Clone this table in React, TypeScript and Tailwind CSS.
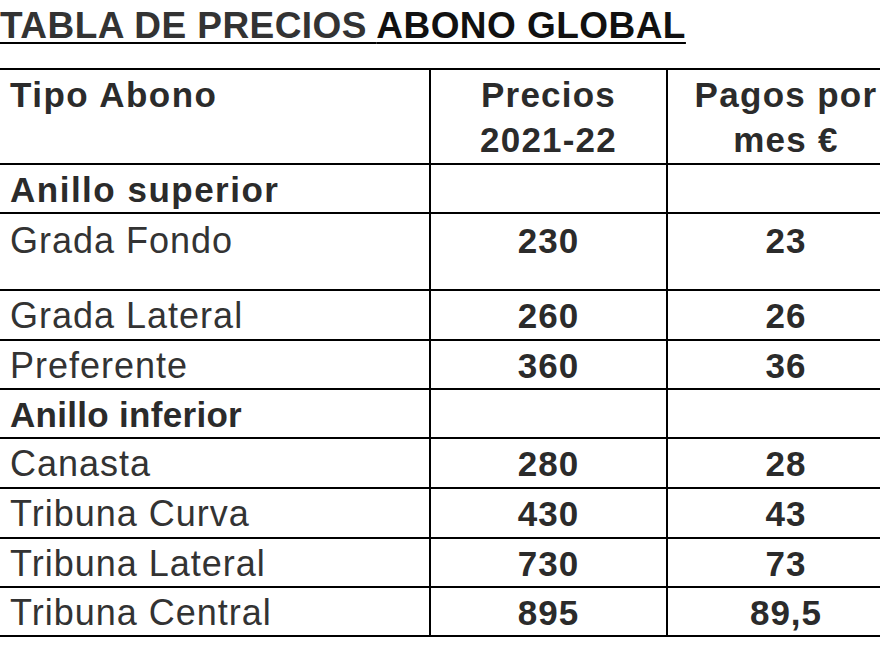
import React from "react";

type Row = {
  name: string;
  price?: string;
  month?: string;
  section?: boolean;
  h: string;
  pt?: string;
  track?: string;
};

const rows: Row[] = [
  { name: "Anillo superior", section: true, h: "h-[49px]", track: "tracking-[1.5px]" },
  { name: "Grada Fondo", price: "230", month: "23", h: "h-[77px]", pt: "pt-[4px]" },
  { name: "Grada Lateral", price: "260", month: "26", h: "h-[50px]" },
  { name: "Preferente", price: "360", month: "36", h: "h-[49px]" },
  { name: "Anillo inferior", section: true, h: "h-[49px]", track: "tracking-[0.3px]" },
  { name: "Canasta", price: "280", month: "28", h: "h-[50px]" },
  { name: "Tribuna Curva", price: "430", month: "43", h: "h-[50px]" },
  { name: "Tribuna Lateral", price: "730", month: "73", h: "h-[49px]" },
  { name: "Tribuna Central", price: "895", month: "89,5", h: "h-[49px]" },
];

const font = { fontFamily: '"Liberation Sans", Arial, sans-serif' };

export default function App() {
  return (
    <div className="w-[880px] h-[660px] overflow-hidden bg-white" style={font}>
      <div className="pt-[6px] h-[46px] text-[37px] leading-[40px] font-bold tracking-[0.45px] whitespace-nowrap underline decoration-2 underline-offset-[4px]">
        <span className="text-[#333]">TABLA DE PRECIOS </span>
        <span className="text-[#111]">ABONO GLOBAL</span>
      </div>
      <div className="mt-[22px] w-[920px] border-t-2 border-black">
        <div className="flex h-[95px] border-b-2 border-black text-[35px] leading-[45px] font-bold text-[#2b2b2b]">
          <div className="w-[431px] border-r-2 border-black pl-[10px] pt-[2px] tracking-[1.5px]">Tipo Abono</div>
          <div className="w-[237px] border-r-2 border-black pt-[2px] text-center tracking-[1.2px]">
            Precios
            <br />
            2021-22
          </div>
          <div className="w-[236px] pt-[2px] text-center whitespace-nowrap tracking-[1.3px]">
            Pagos por
            <br />
            mes €
          </div>
        </div>
        {rows.map((r) => (
          <div key={r.name} className={`flex ${r.h} border-b-2 border-black leading-[45px]`}>
            <div
              className={`w-[431px] border-r-2 border-black pl-[10px] ${r.pt ?? "pt-[2px]"} ${
                r.section
                  ? `text-[35px] font-bold ${r.track} text-[#2b2b2b]`
                  : "text-[36px] tracking-[1px] text-[#333]"
              }`}
            >
              {r.name}
            </div>
            <div
              className={`w-[237px] border-r-2 border-black ${r.pt ?? "pt-[2px]"} text-center text-[35px] font-bold tracking-[1px] text-[#2b2b2b]`}
            >
              {r.price}
            </div>
            <div
              className={`w-[236px] ${r.pt ?? "pt-[2px]"} text-center text-[35px] font-bold tracking-[1px] text-[#2b2b2b]`}
            >
              {r.month}
            </div>
          </div>
        ))}
      </div>
    </div>
  );
}
